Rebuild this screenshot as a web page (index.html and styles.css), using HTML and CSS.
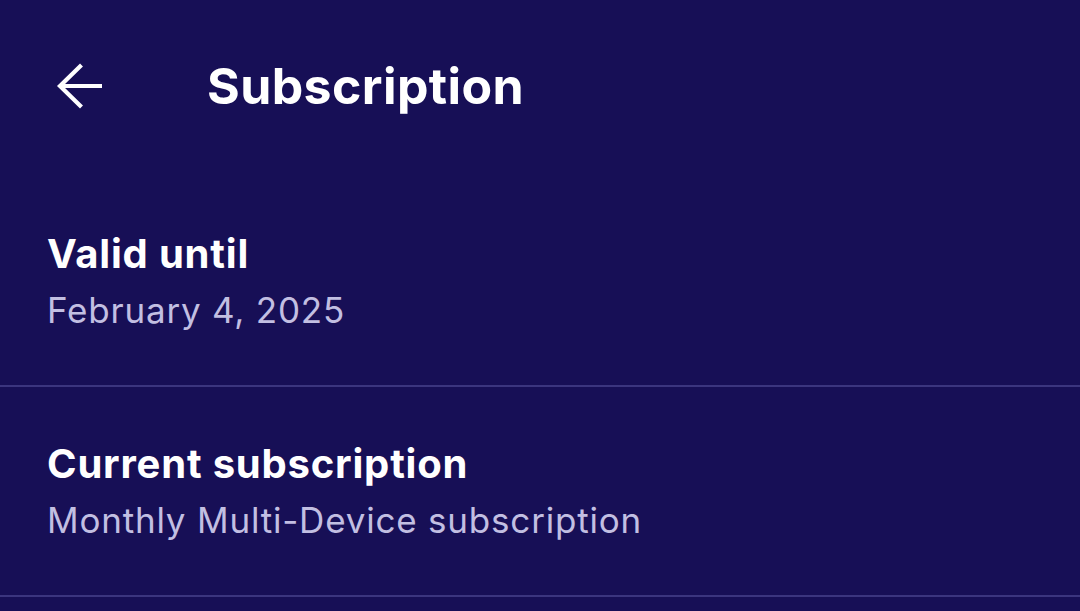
FILE: index.html
```html
<!DOCTYPE html>
<html>
<head>
<meta charset="utf-8">
<link rel="stylesheet" href="styles.css">
</head>
<body>
<div class="app">
  <header class="topbar">
    <button class="back" aria-label="Back">
      <svg width="48" height="48" viewBox="0 0 48 48" fill="none" stroke="#fff" stroke-width="4.2" stroke-linecap="butt">
        <path d="M46 24H4"/>
        <path d="M25.5 3L4 24L25.5 45"/>
      </svg>
    </button>
    <h1 class="title">Subscription</h1>
  </header>
  <section class="item">
    <div class="label">Valid until</div>
    <div class="value">February 4, 2025</div>
  </section>
  <section class="item">
    <div class="label">Current subscription</div>
    <div class="value">Monthly Multi-Device subscription</div>
  </section>
</div>
</body>
</html>
```
FILE: styles.css
```css
html, body {
  margin: 0;
  padding: 0;
  background: #170f56;
}
body {
  font-family: "Inter", "Lato", sans-serif;
  font-variant-ligatures: none;
  color: #fff;
  width: 1080px;
  height: 611px;
  overflow: hidden;
}
.topbar {
  display: flex;
  align-items: center;
  height: 172px;
  margin-bottom: 5px;
  padding-left: 56px;
}
.back {
  background: none;
  border: 0;
  padding: 0;
  width: 48px;
  height: 48px;
  display: flex;
}
.title {
  margin: 0 0 0 103px;
  font-size: 50px;
  font-weight: 700;
  letter-spacing: 0.4px;
  line-height: 1;
}
.item {
  padding: 0 47px;
  height: 210px;
  border-bottom: 2.5px solid #3b357e;
  box-sizing: border-box;
  display: flex;
  flex-direction: column;
  justify-content: center;
}
.label {
  font-size: 40px;
  font-weight: 700;
  line-height: 48px;
  letter-spacing: 0.8px;
}
.value {
  font-size: 35px;
  font-weight: 400;
  color: #c2bfe2;
  line-height: 44px;
  margin-top: 10px;
  letter-spacing: 0.8px;
}
```
